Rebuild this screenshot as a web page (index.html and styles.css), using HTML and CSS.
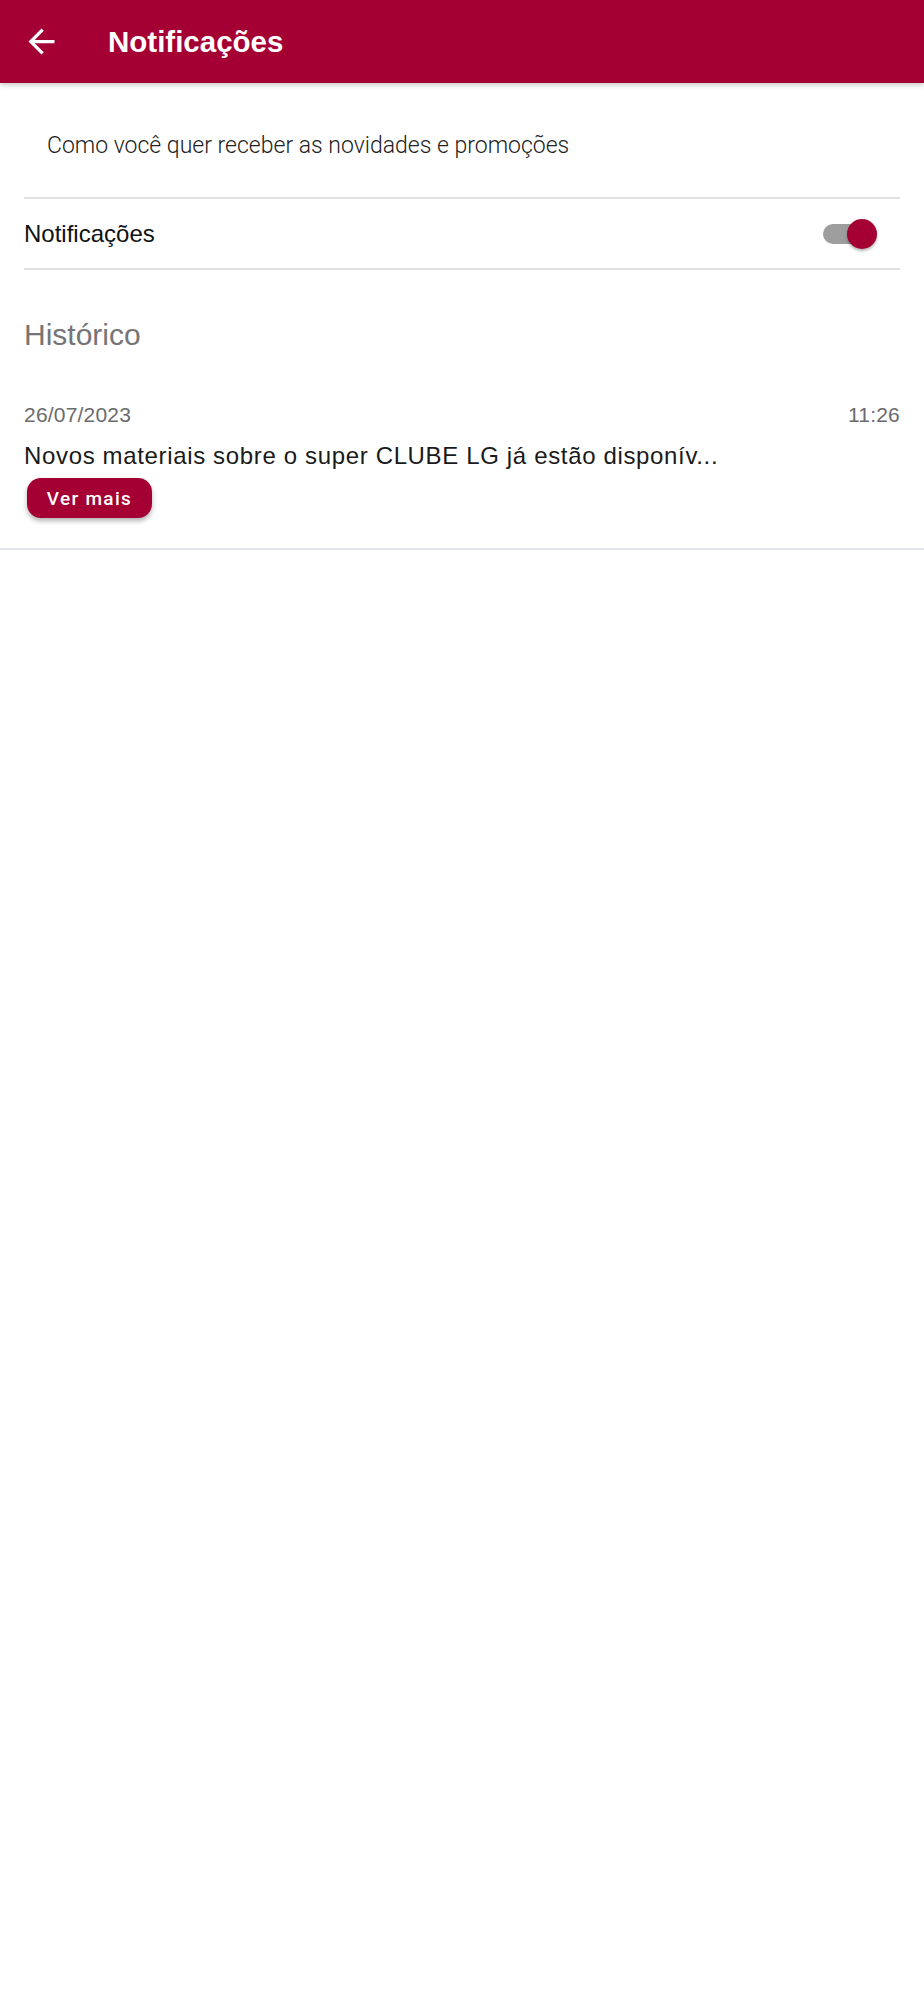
FILE: index.html
```html
<!DOCTYPE html>
<html lang="pt-BR">
<head>
    <meta charset="UTF-8">
    <meta name="viewport" content="width=device-width, initial-scale=1.0">
    <title>Notificações</title>
    <link rel="stylesheet" href="styles.css">
</head>
<body>
    <header class="topbar">
        <svg class="back" viewBox="0 0 24 24" width="39" height="39">
            <path d="M20 11H7.83l5.59-5.59L12 4l-8 8 8 8 1.41-1.41L7.83 13H20v-2z" fill="#fff"/>
        </svg>
        <h1 class="title">Notificações</h1>
    </header>

    <div class="content">
        <p class="intro">Como você quer receber as novidades e promoções</p>

        <div class="setting">
            <span class="setting-label">Notificações</span>
            <div class="switch">
                <div class="track"></div>
                <div class="thumb"></div>
            </div>
        </div>

        <h2 class="history-title">Histórico</h2>

        <div class="item">
            <div class="item-head">
                <span>26/07/2023</span>
                <span>11:26</span>
            </div>
            <p class="item-text">Novos materiais sobre o super CLUBE LG já estão disponív...</p>
            <button class="more">Ver mais</button>
        </div>
    </div>
    <div class="bottom-line"></div>
</body>
</html>
```

FILE: styles.css
```css
body {
    margin: 0;
    background: #fff;
    font-family: "Liberation Sans", Arial, sans-serif;
}
.topbar {
    height: 83px;
    background-color: #a50034;
    display: flex;
    align-items: center;
    padding-left: 22px;
    box-shadow: 0 2px 5px rgba(0, 0, 0, 0.22);
    position: relative;
}
.back {
    display: block;
}
.title {
    margin: 0 0 0 47px;
    color: #fff;
    font-size: 29.5px;
    font-weight: bold;
    line-height: 34px;
}
.content {
    padding: 0 24px;
}
.intro {
    margin: 0;
    padding: 50px 0 38px 23px;
    font-family: Roboto, "Liberation Sans", sans-serif;
    font-weight: 300;
    font-size: 23px;
    line-height: 26px;
    color: #222;
    border-bottom: 2px solid #e0e0e0;
}
.setting {
    height: 69px;
    display: flex;
    align-items: center;
    justify-content: space-between;
    border-bottom: 2px solid #e0e0e0;
}
.setting-label {
    font-size: 24px;
    line-height: 28px;
    color: #111;
}
.switch {
    width: 54px;
    height: 30px;
    margin-right: 23px;
    position: relative;
    display: flex;
    align-items: center;
}
.track {
    width: 46px;
    height: 20px;
    border-radius: 10px;
    background-color: #9e9e9e;
}
.thumb {
    position: absolute;
    right: 0;
    top: 0;
    width: 30px;
    height: 30px;
    border-radius: 50%;
    background-color: #a50034;
    box-shadow: 0 2px 3px rgba(0, 0, 0, 0.3);
}
.history-title {
    margin: 48px 0 0;
    font-size: 30px;
    line-height: 34px;
    font-weight: normal;
    color: #757575;
}
.item-head {
    margin-top: 51px;
    display: flex;
    justify-content: space-between;
    font-size: 21px;
    line-height: 24px;
    letter-spacing: 0.2px;
    color: #6b6b6b;
}
.item-text {
    margin: 15px 0 0;
    font-size: 24px;
    line-height: 28px;
    letter-spacing: 0.65px;
    color: #1a1a1a;
}
.more {
    margin: 8px 0 0 3px;
    height: 40px;
    width: 125px;
    border: none;
    border-radius: 14px;
    background-color: #a50034;
    color: #fff;
    font-family: Roboto, "Liberation Sans", sans-serif;
    font-weight: 500;
    font-size: 19px;
    letter-spacing: 1.3px;
    box-shadow: 0 3px 5px rgba(0, 0, 0, 0.3);
    display: block;
}
.bottom-line {
    margin-top: 30px;
    height: 2px;
    background-color: #e1e6ec;
}
```
